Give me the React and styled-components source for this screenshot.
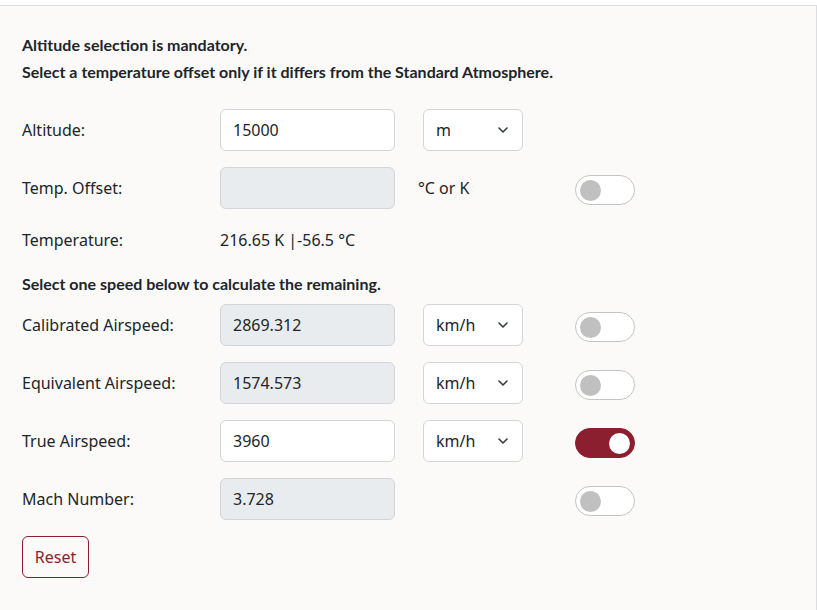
import React, { useState } from "react";
import styled, { createGlobalStyle } from "styled-components";

const Global = createGlobalStyle`
  html, body { margin: 0; padding: 0; background: #ffffff; }
  body { font-family: "Noto Sans", "Open Sans", sans-serif; color: #212529; }
  * { box-sizing: border-box; }
`;

const Page = styled.div`
  padding-top: 5px;
  width: 817px;
  height: 610px;
  overflow: hidden;
`;

const Panel = styled.div`
  margin-left: -1px;
  width: 818px;
  min-height: 620px;
  background: #fbfaf9;
  border: 1px solid #dedce3;
  padding: 25px 0 0 22px;
`;

const Note = styled.p`
  margin: 0 0 ${(p) => p.$mb ?? 0}px;
  font-family: Lato, sans-serif;
  font-weight: 700;
  font-size: 16px;
  line-height: ${(p) => p.$lh ?? 27}px;
  color: #212529;
`;

const Intro = styled.div`
  margin-bottom: 24px;
`;

const Row = styled.div`
  display: grid;
  grid-template-columns: 198px 198px 157px 60px;
  align-items: center;
  height: ${(p) => (p.$compact ? "24px" : "42px")};
  margin-bottom: ${(p) => p.$mb ?? 16}px;
`;

const Label = styled.span`
  font-size: 16px;
  line-height: 24px;
`;

const Value = styled.span`
  font-size: 16px;
  line-height: 24px;
`;

const Input = styled.input`
  width: 175px;
  height: 42px;
  padding: 0 12px;
  font-family: "Noto Sans", sans-serif;
  font-size: 16px;
  color: #212529;
  background: ${(p) => (p.disabled ? "#e9ecef" : "#ffffff")};
  border: 1px solid #d3d5da;
  border-radius: 6px;
  outline: none;
`;

const SelectBox = styled.div`
  margin-left: 5px;
  width: 100px;
  height: 42px;
  display: flex;
  align-items: center;
  justify-content: space-between;
  padding: 0 14px 0 12px;
  background: #ffffff;
  border: 1px solid #d3d5da;
  border-radius: 6px;
  font-size: 16px;
`;

const Unit = styled.span`
  font-size: 16px;
  line-height: 24px;
`;

const Track = styled.button`
  width: 60px;
  height: 30px;
  margin-top: 4px;
  padding: 0 4px;
  border-radius: 15px;
  border: 1px solid ${(p) => (p.$on ? "#8b1e2f" : "#c4c4c4")};
  background: ${(p) => (p.$on ? "#8b1e2f" : "#ffffff")};
  display: flex;
  align-items: center;
  justify-content: ${(p) => (p.$on ? "flex-end" : "flex-start")};
  cursor: pointer;
`;

const Knob = styled.span`
  width: 21px;
  height: 21px;
  border-radius: 50%;
  background: ${(p) => (p.$on ? "#ffffff" : "#c0c0c0")};
`;

const ResetButton = styled.button`
  height: 42px;
  width: 67px;
  font-family: "Noto Sans", sans-serif;
  font-size: 16px;
  color: #8b1e2f;
  background: transparent;
  border: 1px solid #8b1e2f;
  border-radius: 6px;
  cursor: pointer;
`;

const Chevron = () => (
  <svg width="10" height="6" viewBox="0 0 10 6" fill="none">
    <path d="M1 1l4 4 4-4" stroke="#343a40" strokeWidth="1.6" strokeLinecap="round" strokeLinejoin="round" />
  </svg>
);

const Select = ({ value }) => (
  <SelectBox>
    <span>{value}</span>
    <Chevron />
  </SelectBox>
);

const Toggle = ({ on, onClick }) => (
  <Track $on={on} onClick={onClick}>
    <Knob $on={on} />
  </Track>
);

export default function App() {
  const [active, setActive] = useState("tas");
  const [offset, setOffset] = useState(false);
  const speeds = [
    { id: "cas", label: "Calibrated Airspeed:", value: "2869.312", unit: "km/h" },
    { id: "eas", label: "Equivalent Airspeed:", value: "1574.573", unit: "km/h" },
    { id: "tas", label: "True Airspeed:", value: "3960", unit: "km/h" },
    { id: "mach", label: "Mach Number:", value: "3.728" },
  ];
  return (
    <Page>
      <Global />
      <Panel>
        <Intro>
          <Note>Altitude selection is mandatory.</Note>
          <Note>Select a temperature offset only if it differs from the Standard Atmosphere.</Note>
        </Intro>
        <Row>
          <Label>Altitude:</Label>
          <Input defaultValue="15000" />
          <Select value="m" />
        </Row>
        <Row $mb={19}>
          <Label>Temp. Offset:</Label>
          <Input disabled={!offset} />
          <Unit>°C or K</Unit>
          <Toggle on={offset} onClick={() => setOffset(!offset)} />
        </Row>
        <Row $compact $mb={20}>
          <Label>Temperature:</Label>
          <Value>216.65 K |-56.5 °C</Value>
        </Row>
        <Note $lh={24} $mb={8}>Select one speed below to calculate the remaining.</Note>
        {speeds.map((s) => (
          <Row key={s.id}>
            <Label>{s.label}</Label>
            <Input disabled={active !== s.id} defaultValue={s.value} />
            {s.unit ? <Select value={s.unit} /> : <span />}
            <Toggle on={active === s.id} onClick={() => setActive(s.id)} />
          </Row>
        ))}
        <ResetButton>Reset</ResetButton>
      </Panel>
    </Page>
  );
}
